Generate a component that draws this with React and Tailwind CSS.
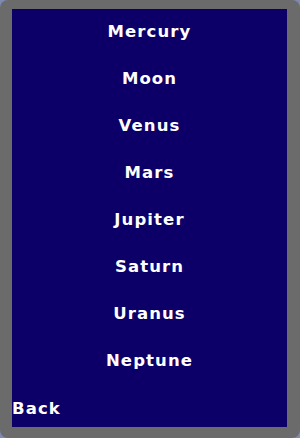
export default function App() {
  const planets = ["Mercury", "Moon", "Venus", "Mars", "Jupiter", "Saturn", "Uranus", "Neptune"];
  return (
    <div className="w-[300px] h-[438px] bg-[#7d8ab3]">
      <div className="w-full h-full bg-[#6b6b6b] rounded-[8px] pl-[12px] pr-[13px] pt-[9px] pb-[11px]">
        <div className="w-full h-full bg-[#0c0068] flex flex-col text-white font-bold text-[16.5px] tracking-[1.1px]" style={{ fontFamily: '"DejaVu Sans", sans-serif' }}>
          <div className="flex flex-col items-center pt-[13px] gap-[28px]">
            {planets.map((p) => (
              <div key={p} className="leading-[19px]">{p}</div>
            ))}
          </div>
          <div className="mt-auto pb-[9px] leading-[19px]">Back</div>
        </div>
      </div>
    </div>
  );
}
